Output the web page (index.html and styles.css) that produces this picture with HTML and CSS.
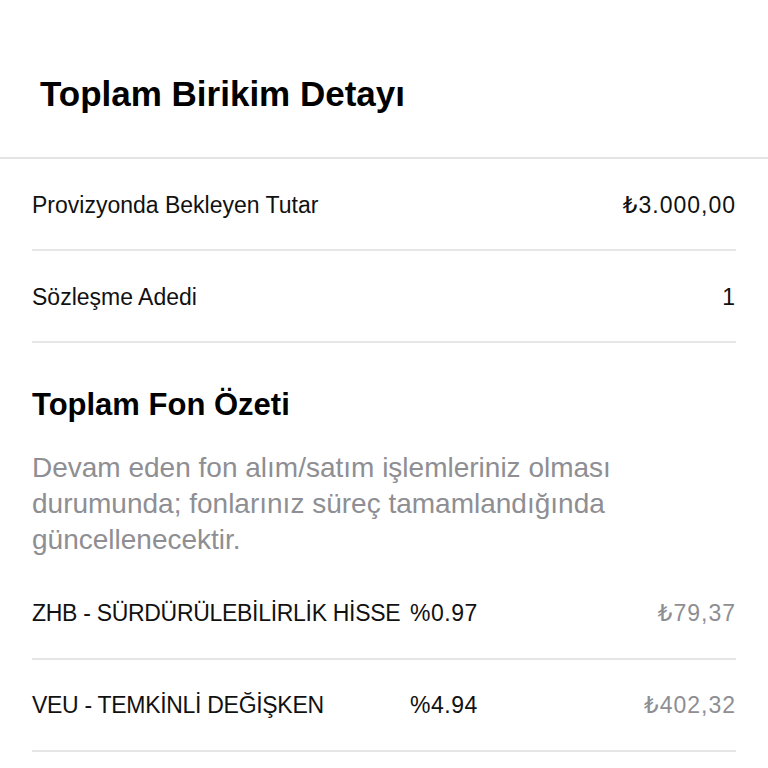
FILE: index.html
```html
<!DOCTYPE html>
<html lang="tr">
<head>
<meta charset="utf-8">
<title>Toplam Birikim Detayı</title>
<link rel="stylesheet" href="styles.css">
</head>
<body>
<header class="page-header">
  <h1 class="page-title">Toplam Birikim Detayı</h1>
</header>
<main class="content">
  <section class="list">
    <div class="row">
      <span class="label">Provizyonda Bekleyen Tutar</span>
      <span class="value">₺3.000,00</span>
    </div>
    <div class="row">
      <span class="label">Sözleşme Adedi</span>
      <span class="value">1</span>
    </div>
  </section>
  <section class="fund-summary">
    <h2 class="section-title">Toplam Fon Özeti</h2>
    <p class="note">Devam eden fon alım/satım işlemleriniz olması durumunda; fonlarınız süreç tamamlandığında güncellenecektir.</p>
    <div class="fund-list">
      <div class="fund-row">
        <span class="fund-name">ZHB - SÜRDÜRÜLEBİLİRLİK HİSSE</span>
        <span class="fund-pct">%0.97</span>
        <span class="fund-amount">₺79,37</span>
      </div>
      <div class="fund-row">
        <span class="fund-name">VEU - TEMKİNLİ DEĞİŞKEN</span>
        <span class="fund-pct">%4.94</span>
        <span class="fund-amount">₺402,32</span>
      </div>
    </div>
  </section>
</main>
</body>
</html>
```

FILE: styles.css
```css
* {
  box-sizing: border-box;
}

html, body {
  margin: 0;
  padding: 0;
  background: #ffffff;
}

body {
  font-family: "Liberation Sans", Arial, "DejaVu Sans", sans-serif;
  color: #111111;
}

.page-header {
  padding: 73px 40px 42px;
  border-bottom: 2px solid #e4e4e4;
}

.page-title {
  margin: 0;
  font-size: 35px;
  line-height: 42px;
  font-weight: 700;
  color: #000000;
}

.content {
  padding: 0 32px;
}

.list {
  display: flex;
  flex-direction: column;
}

.row {
  display: flex;
  justify-content: space-between;
  align-items: center;
  padding: 32px 0 30px;
  font-size: 23px;
  line-height: 28px;
  border-bottom: 2px solid #e6e6e6;
}

.value {
  text-align: right;
  letter-spacing: 1px;
}

.fund-summary {
  padding-top: 44px;
}

.section-title {
  margin: 0;
  font-size: 31px;
  line-height: 36px;
  font-weight: 700;
  color: #000000;
}

.note {
  margin: 27px 0 10px;
  font-size: 28px;
  line-height: 36px;
  color: #8e8e93;
}

.fund-list {
  display: flex;
  flex-direction: column;
}

.fund-row {
  display: flex;
  align-items: center;
  padding: 31px 0 31px;
  font-size: 23px;
  line-height: 28px;
  border-bottom: 2px solid #e6e6e6;
}

.fund-name {
  flex: 0 0 auto;
  min-width: 378px;
  white-space: nowrap;
  letter-spacing: -0.3px;
}

.fund-pct {
  flex: 0 0 auto;
  letter-spacing: 0.5px;
}

.fund-amount {
  margin-left: auto;
  color: #8e8e93;
  letter-spacing: 1px;
}
```
